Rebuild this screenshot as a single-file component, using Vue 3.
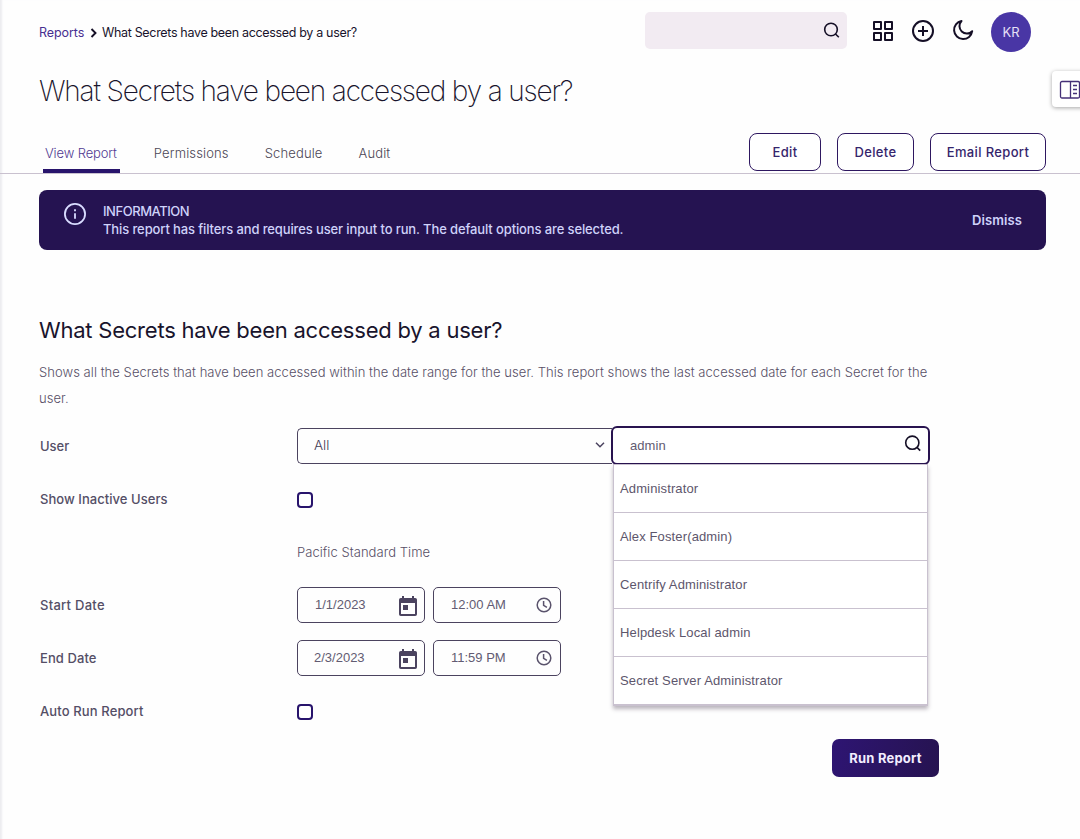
<script setup>
const tabs = [
  { label: 'View Report', key: 'view', active: true },
  { label: 'Permissions', key: 'permissions' },
  { label: 'Schedule', key: 'schedule' },
  { label: 'Audit', key: 'audit' }
]
const dates = [
  { label: 'Start Date', date: '1/1/2023', time: '12:00 AM', key: 'start' },
  { label: 'End Date', date: '2/3/2023', time: '11:59 PM', key: 'end' }
]
const suggestions = [
  'Administrator',
  'Alex Foster(admin)',
  'Centrify Administrator',
  'Helpdesk Local admin',
  'Secret Server Administrator'
]
</script>

<template>
  <div class="page">
    <header class="topbar">
      <nav class="crumbs">
        <a class="crumb-link">Reports</a>
        <svg class="crumb-sep" width="8" height="10" viewBox="0 0 8 10"><path d="M1.500 1l4 4-4 4" /></svg>
        <span class="crumb-current">What Secrets have been accessed by a user?</span>
      </nav>
      <div class="tools">
        <div class="search">
          <svg class="line" width="18" height="18" viewBox="0 0 18 18"><circle cx="8" cy="7.500" r="6.300" /><path d="M12.500 12l3.300 3.300" /></svg>
        </div>
        <svg class="line thick grid-icon" width="22" height="22" viewBox="0 0 22 22">
          <path d="M2 2h7v7H2zM13 2h7v7h-7zM2 13h7v7H2zM13 13h7v7h-7z" />
        </svg>
        <svg class="line thick add-icon" width="24" height="24" viewBox="0 0 24 24"><circle cx="12" cy="12" r="10" /><path d="M12 7v10M7 12h10" /></svg>
        <svg class="line thick moon-icon" width="22" height="22" viewBox="0 0 22 22"><path d="M9.500 2A9.100 9.100 0 1 0 20.200 12.200A7.300 7.300 0 0 1 9.500 2z" /></svg>
        <div class="avatar">KR</div>
      </div>
    </header>

    <h1 class="title">What Secrets have been accessed by a user?</h1>

    <div class="tabbar">
      <div class="tabs">
        <div v-for="t in tabs" :key="t.key" class="tab" :class="[t.key, { active: t.active }]"><span>{{ t.label }}</span></div>
      </div>
      <div class="actions">
        <button class="btn edit">Edit</button>
        <button class="btn delete">Delete</button>
        <button class="btn email">Email Report</button>
      </div>
    </div>

    <section class="info">
      <svg class="info-icon" width="24" height="24" viewBox="0 0 24 24"><circle cx="12" cy="12" r="10.100" /><path d="M12 11.300v5.400M12 7.200v2" /></svg>
      <div class="info-text">
        <div class="info-head">INFORMATION</div>
        <div class="info-body">This report has filters and requires user input to run. The default options are selected.</div>
      </div>
      <span class="dismiss">Dismiss</span>
    </section>

    <main class="report">
      <h2 class="heading">What Secrets have been accessed by a user?</h2>
      <p class="desc">
        <span class="desc-line">Shows all the Secrets that have been accessed within the date range for the user. This report shows the last accessed date for each Secret for the</span>
        <span class="desc-line">user.</span>
      </p>

      <div class="row">
        <label class="l-user">User</label>
        <div class="select">
          <span>All</span>
          <svg width="12" height="8" viewBox="0 0 12 8"><path d="M2 1.800l4 4 4-4" /></svg>
        </div>
        <div class="combo">
          <span>admin</span>
          <svg class="line" width="18" height="18" viewBox="0 0 18 18"><circle cx="8.300" cy="7.700" r="6.600" /><path d="M13 12.400l3.200 3.200" /></svg>
          <ul class="menu">
            <li v-for="s in suggestions" :key="s">{{ s }}</li>
          </ul>
        </div>
      </div>

      <div class="row">
        <label class="l-inactive">Show Inactive Users</label>
        <span class="checkbox"></span>
      </div>

      <div class="row">
        <label></label>
        <span class="zone">Pacific Standard Time</span>
      </div>

      <div v-for="d in dates" :key="d.key" class="row">
        <label :class="'l-' + d.key">{{ d.label }}</label>
        <div class="field" :class="'date-' + d.key">
          <span>{{ d.date }}</span>
          <svg class="cal" width="18" height="20" viewBox="0 0 18 20">
            <path fill-rule="evenodd" d="M3 0h2v2h8V0h2v2h1.200A1.800 1.800 0 0 1 18 3.800v14.400A1.800 1.800 0 0 1 16.200 20H1.800A1.800 1.800 0 0 1 0 18.200V3.800A1.800 1.800 0 0 1 1.800 2H3zM2 7v11h14V7z" />
            <path d="M4 9h5v5H4z" />
          </svg>
        </div>
        <div class="field time">
          <span>{{ d.time }}</span>
          <svg class="clock" width="16" height="16" viewBox="0 0 16 16"><circle cx="8" cy="8" r="6.800" /><path d="M7.600 4v4.400l3.300 2" /></svg>
        </div>
      </div>

      <div class="row">
        <label class="l-auto">Auto Run Report</label>
        <span class="checkbox"></span>
      </div>

      <div class="submit">
        <button class="run">Run Report</button>
      </div>
    </main>

    <div class="drawer">
      <svg width="22" height="20" viewBox="0 0 22 20"><rect x="1.500" y="1.500" width="19" height="16.500" rx="1.500" /><path d="M11.500 1.500v16.500M14 5.500h4M14 9.500h4M14 13.500h4" /></svg>
    </div>
  </div>
</template>

<style>
body {
  background: #fff;
  overflow: hidden;
}
</style>

<style scoped>
.page {
  position: relative;
  box-sizing: border-box;
  width: 1080px;
  height: 839px;
  overflow: hidden;
  background: #fefefe;
  box-shadow: inset 3px 0 2px -1px #ededf0;
  font-family: Inter, "Liberation Sans", sans-serif;
  font-size: 13px;
  color: #19142c;
  white-space: nowrap;
}
.page * { box-sizing: border-box; }
svg { display: block; flex: none; }
.line { fill: none; stroke: #150f26; stroke-width: 1.600; }
.thick { stroke-width: 2; stroke-linejoin: round; }

.topbar {
  display: flex;
  justify-content: space-between;
  height: 64px;
  padding: 12px 49px 0 39px;
}
.crumbs { display: flex; align-items: center; height: 41px; font-size: 12.500px; font-weight: 400; }
.crumb-link { width: 51px; color: #472f91; letter-spacing: -0.080px; }
.crumb-sep { margin-right: 4px; fill: none; stroke: #150f26; stroke-width: 1.900; }
.crumb-current { letter-spacing: -0.330px; }
.tools { display: flex; align-items: flex-start; }
.search {
  display: flex;
  justify-content: flex-end;
  width: 202px;
  height: 37px;
  padding: 10px 6px 0 0;
  margin-right: 26px;
  border-radius: 5px;
  background: #f2ebf2;
}
.grid-icon { margin: 8px 17px 0 -1px; }
.add-icon { margin: 7px 17px 0 0; }
.moon-icon { margin: 7px 17px 0 0; }
.avatar {
  width: 40px;
  height: 40px;
  border-radius: 50%;
  background: #4936a5;
  color: #e6e0f7;
  font-size: 13px;
  line-height: 41px;
  text-align: center;
}

.title {
  margin: 7px 0 0 39px;
  font-size: 28px;
  line-height: 41px;
  font-weight: 200;
  letter-spacing: -1.170px;
  color: #19142c;
}
.tabbar {
  display: flex;
  justify-content: space-between;
  height: 62px;
  padding: 21px 34px 0 43px;
  border-bottom: 1px solid #c9c1cf;
}
.tabs { display: flex; gap: 32px; color: #4b4655; }
.tab { height: 40px; padding: 0 2px; line-height: 41px; font-size: 13px; font-weight: 300; letter-spacing: 0.140px; }
.tab.active { padding-right: 3px; letter-spacing: -0.130px; color: #513a92; border-bottom: 4px solid #28146c; }
.actions { display: flex; gap: 16px; }
.btn {
  height: 38px;
  border: 1px solid #2e1760;
  border-radius: 8px;
  padding: 0;
  background: #fff;
  color: #35256c;
  font: 500 13px Inter, sans-serif;
  letter-spacing: 0.350px;
}
.btn.edit { width: 72px; }
.btn.delete { width: 77px; }
.btn.email { width: 116px; }

.info {
  display: flex;
  width: 1007px;
  height: 60px;
  margin: 16px 0 0 39px;
  padding: 12px 24px 0;
  border-radius: 8px;
  background: #251351;
  color: #cfd2fa;
}
.info-icon { margin-right: 16px; fill: none; stroke: #d9dcff; stroke-width: 1.800; }
.info-text { flex: 1; line-height: 18px; font-size: 13px; }
.info-head { font-weight: 500; letter-spacing: -0.460px; }
.info-body { letter-spacing: -0.120px; font-weight: 500; }
.dismiss { line-height: 37px; font-weight: 600; letter-spacing: 0.100px; }

.report { padding: 64px 0 0 39px; }
.heading { margin: 0; font-size: 22px; line-height: 32px; font-weight: 400; letter-spacing: -0.230px; }
.desc { margin: 13px 0 17px; color: #574f66; font-size: 13px; line-height: 26px; font-weight: 300; letter-spacing: 0.052px; }
.desc-line { display: block; }
.row { display: flex; align-items: center; height: 53px; margin-left: 1px; margin-top: 0; color: #4b4560; }
.row label { width: 257px; font-weight: 500; color: #544e66; letter-spacing: 0.080px; }
.row .l-inactive { letter-spacing: 0.050px; }
.row .l-start { letter-spacing: 0.270px; }
.row .l-auto { letter-spacing: 0.120px; }
.row .l-user { letter-spacing: 0; }
.desc + .row { height: 36px; margin-bottom: 8px; }
.select {
  display: flex;
  align-items: center;
  justify-content: space-between;
  width: 315px;
  height: 36px;
  padding: 0 6px 2px 16px;
  border: 1px solid #4b435f;
  border-right: 0;
  border-radius: 5px 0 0 5px;
  font-size: 13.500px;
  font-weight: 300;
  color: #443c56;
}
.select svg { fill: none; stroke: #4b435f; stroke-width: 1.500; }
.combo {
  position: relative;
  display: flex;
  align-items: center;
  justify-content: space-between;
  width: 319px;
  height: 39px;
  margin: -2px 0 0 -1px;
  padding: 0 6px 0 17px;
  border: 2px solid #28134f;
  border-radius: 6px;
  background: #fff;
  font: 13px "Liberation Sans", Arial, sans-serif;
  letter-spacing: 0.050px;
  color: #625b72;
}
.combo > svg { margin-bottom: 2px; }
.menu {
  position: absolute;
  top: 36px;
  left: 0;
  z-index: 2;
  width: 315px;
  margin: 0;
  padding: 0;
  list-style: none;
  border: 1px solid #c9c1cf;
  border-bottom-width: 2px;
  background: #fff;
  box-shadow: 0 3px 4px rgba(60, 45, 70, 0.350);
}
.menu li { height: 48px; padding-left: 6px; line-height: 47px; font-size: 13px; color: #5d566c; letter-spacing: 0.130px; }
.menu li:first-child { height: 47px; }
.menu li + li { border-top: 1px solid #c9c1cf; }
.checkbox { position: relative; top: 1px; width: 16px; height: 16px; border: 2px solid #28146c; border-radius: 4px; background: #fff; }
.zone { color: #574f66; font-size: 13px; font-weight: 300; letter-spacing: 0.050px; }
.field {
  display: flex;
  align-items: center;
  justify-content: space-between;
  width: 128px;
  height: 36px;
  margin-right: 8px;
  padding: 0 7px 0 17px;
  border: 1px solid #4b435f;
  border-radius: 5px;
  font: 13px "Liberation Sans", Arial, sans-serif;
  color: #625b72;
}
.date-end { padding-left: 16px; }
.cal { margin-top: 3px; fill: #4b435f; }
.clock { margin-right: 1px; fill: none; stroke: #5a536c; stroke-width: 1.500; }
.submit { width: 900px; display: flex; justify-content: flex-end; }
.run {
  width: 107px;
  height: 38px;
  margin-top: 2px;
  padding: 0;
  border: 0;
  border-radius: 7px;
  background: linear-gradient(100deg, #2e1573, #261350);
  color: #f3edff;
  font: 700 13px Inter, sans-serif;
  letter-spacing: 0.200px;
}
.drawer {
  position: absolute;
  top: 71px;
  right: -8px;
  width: 36px;
  height: 36px;
  padding: 9px 0 0 6.500px;
  border-radius: 4px;
  background: #fff;
  box-shadow: 0 1px 4px rgba(0, 0, 0, 0.350);
}
.drawer svg { fill: none; stroke: #453078; stroke-width: 1.300; }
</style>
